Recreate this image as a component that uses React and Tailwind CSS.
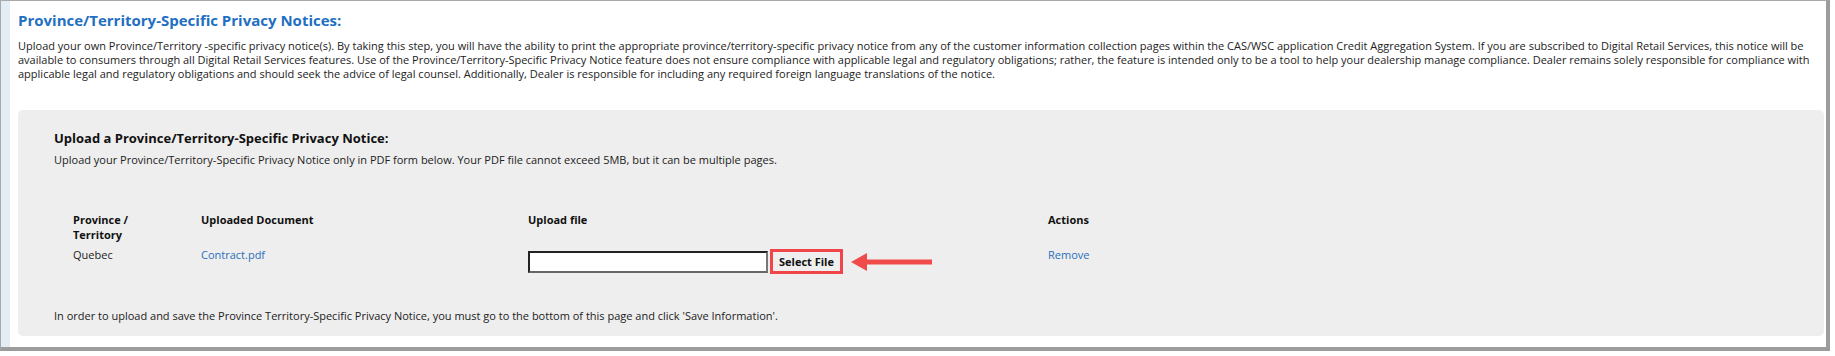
import React from 'react';

const rows = [{ province: 'Quebec', doc: 'Contract.pdf' }];

const App = () => {
  return (
    <div className="w-[1835px] h-[356px] bg-white font-['Open_Sans',sans-serif] text-[#222]">
      <div className="w-[1830px] h-[351px] flex border-t border-l border-[#a9a9a9] border-r-4 border-b-4 border-r-[#9c9c9c] border-b-[#9c9c9c]">
        {/* left accent strip */}
        <div className="w-[9px] bg-[#e4ecf6]" />

        <div className="flex-1 bg-white pl-[8px] pr-[2px]">
          <h2 className="pt-[7px] text-[15px] leading-[24px] font-bold text-[#1f6fc2]">
            Province/Territory-Specific Privacy Notices:
          </h2>
          <p className="mt-[7px] text-[11px] leading-[14px] text-[#222] pr-[10px]">
            Upload your own Province/Territory -specific privacy notice(s). By taking this step, you will have the ability to print the appropriate province/territory-specific privacy notice from any of the customer information collection pages within the CAS/WSC application Credit Aggregation System. If you are subscribed to Digital Retail Services, this notice will be available to consumers through all Digital Retail Services features. Use of the Province/Territory-Specific Privacy Notice feature does not ensure compliance with applicable legal and regulatory obligations; rather, the feature is intended only to be a tool to help your dealership manage compliance. Dealer remains solely responsible for compliance with applicable legal and regulatory obligations and should seek the advice of legal counsel. Additionally, Dealer is responsible for including any required foreign language translations of the notice.
          </p>

          {/* upload panel */}
          <div className="mt-[29px] h-[226px] rounded-[5px] bg-[#eeeeee] pl-[36px] pt-[19px]">
            <h3 className="text-[13px] leading-[18px] font-bold text-[#111]">
              Upload a Province/Territory-Specific Privacy Notice:
            </h3>
            <p className="mt-[6px] text-[11px] leading-[14px] text-[#222]">
              Upload your Province/Territory-Specific Privacy Notice only in PDF form below. Your PDF file cannot exceed 5MB, but it can be multiple pages.
            </p>

            <table className="mt-[45px] ml-[19px] text-[11px] leading-[15px] border-collapse">
              <thead>
                <tr className="font-bold text-[#111] align-top">
                  <th className="w-[128px] text-left font-bold pb-[5px]">Province /<br />Territory</th>
                  <th className="w-[327px] text-left font-bold">Uploaded Document</th>
                  <th className="w-[520px] text-left font-bold">Upload file</th>
                  <th className="text-left font-bold">Actions</th>
                </tr>
              </thead>
              <tbody>
                {rows.map((r) => (
                  <tr key={r.province} className="align-top">
                    <td>{r.province}</td>
                    <td><a className="text-[#2a6ebb]">{r.doc}</a></td>
                    <td>
                      <div className="flex items-center mt-[2px]">
                        <input
                          type="text"
                          className="w-[240px] h-[22px] bg-white border-2 border-t-[#222] border-l-[#222] border-r-[#777] border-b-[#666] outline-none"
                        />
                        <div className="ml-[2px] border-[3px] border-[#f0464a] bg-[#efefef] px-[6px] h-[25px] flex items-center">
                          <span className="font-bold text-[11px] text-[#111]">Select File</span>
                        </div>
                        <svg width="82" height="20" viewBox="0 0 82 20" className="ml-[8px]">
                          <polygon points="0,10 16,1 16,19" fill="#f04a4b" />
                          <rect x="15" y="7.5" width="66" height="5" fill="#f04a4b" />
                        </svg>
                      </div>
                    </td>
                    <td><a className="text-[#2a6ebb]">Remove</a></td>
                  </tr>
                ))}
              </tbody>
            </table>

            <p className="mt-[35px] text-[11px] leading-[14px] text-[#222]">
              In order to upload and save the Province Territory-Specific Privacy Notice, you must go to the bottom of this page and click 'Save Information'.
            </p>
          </div>
        </div>
      </div>
    </div>
  );
};

export default App;
